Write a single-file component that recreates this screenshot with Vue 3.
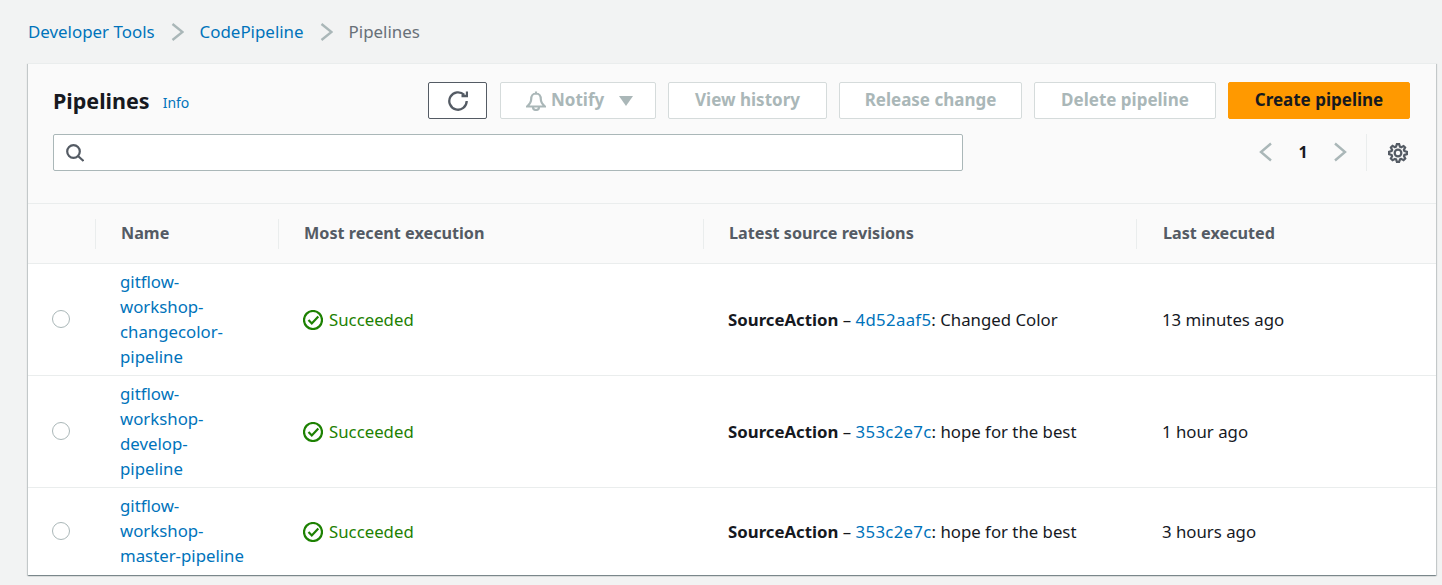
<template>
  <div class="page">
    <nav class="crumbs">
      <a>Developer Tools</a>
      <svg class="sep" width="13" height="20" viewBox="0 0 13 20"><path d="M1.500 2l10 8-10 8" /></svg>
      <a>CodePipeline</a>
      <svg class="sep" width="13" height="20" viewBox="0 0 13 20"><path d="M1.500 2l10 8-10 8" /></svg>
      <span class="current">Pipelines</span>
    </nav>

    <section class="card">
      <header class="head">
        <div class="toolbar">
          <h1 class="title">Pipelines</h1>
          <a class="info">Info</a>
          <div class="actions">
            <button class="btn refresh" aria-label="Refresh">
              <svg width="20" height="20" viewBox="0 0 20 20"><path d="M18.700 10a8.700 8.700 0 1 1-2.500-6.100" /><path d="M19 .5v4.500h-5.500" /></svg>
            </button>
            <button class="btn off notify" disabled>
              <svg width="20" height="20" viewBox="0 0 20 20">
                <path d="M10 2.500c-3.200 0-4.800 2.600-4.800 5.500 0 3.500-1.700 5.500-4.200 7.500h18c-2.500-2-4.200-4-4.200-7.500 0-2.900-1.600-5.500-4.800-5.500z" />
                <path d="M7 16a3 3 0 0 0 6 0M10 .5v2" />
              </svg>
              <span>Notify</span>
              <i class="caret"></i>
            </button>
            <button class="btn off hist" disabled>View history</button>
            <button class="btn off rel" disabled>Release change</button>
            <button class="btn off del" disabled>Delete pipeline</button>
            <button class="btn primary">Create pipeline</button>
          </div>
        </div>
        <div class="filter">
          <label class="search">
            <svg width="18" height="18" viewBox="0 0 18 18"><circle cx="7.500" cy="7.500" r="6.300" /><path d="M12 12l5.500 5" /></svg>
            <input type="text" />
          </label>
          <div class="pager">
            <svg class="arrow" width="16" height="20" viewBox="0 0 16 20"><path d="M13 1.500L3 10l10 8.500" /></svg>
            <span class="num">1</span>
            <svg class="arrow" width="16" height="20" viewBox="0 0 16 20"><path d="M3 1.500L13 10 3 18.500" /></svg>
          </div>
          <div class="gear">
            <svg width="20" height="20" viewBox="-1 -1 18 18">
              <circle cx="8" cy="8" r="3" />
              <path d="M13.300 5.200l1.100-2.100-1.400-1.400-2.100 1.100c-.3-.2-.7-.3-1.100-.4L9 0H7l-.8 2.300c-.3.1-.7.2-1 .4L3.100 1.600 1.600 3.100l1.100 2.100c-.2.3-.3.7-.4 1L0 7v2l2.300.8c.1.4.3.7.4 1.100l-1.100 2.100 1.500 1.500 2.100-1.100c.3.2.7.3 1.100.4L7 16h2l.8-2.300c.4-.1.7-.3 1.100-.4l2.100 1.100 1.500-1.500-1.100-2.100c.2-.3.3-.7.4-1.100L16 9V7l-2.300-.8c-.1-.3-.3-.7-.4-1z" />
            </svg>
          </div>
        </div>
      </header>

      <div class="row thead">
        <div class="cell"></div>
        <div class="cell th">Name</div>
        <div class="cell th">Most recent execution</div>
        <div class="cell th">Latest source revisions</div>
        <div class="cell th last">Last executed</div>
      </div>

      <div v-for="p in pipelines" :key="p.name" class="row tr">
        <div class="cell pick"><span class="radio"></span></div>
        <div class="cell name"><a>{{ p.name }}</a></div>
        <div class="cell status">
          <svg width="20" height="20" viewBox="0 0 20 20"><circle cx="10" cy="10" r="9" /><path d="M5.500 10l3.300 3.500 6.500-7" /></svg>
          Succeeded
        </div>
        <div class="cell"><b>SourceAction</b> – <a class="hash">{{ p.commit }}</a>: {{ p.message }}</div>
        <div class="cell last">{{ p.when }}</div>
      </div>
    </section>
  </div>
</template>

<script setup>
const pipelines = [
  { name: "gitflow-workshop-changecolor-pipeline", commit: "4d52aaf5", message: "Changed Color", when: "13 minutes ago" },
  { name: "gitflow-workshop-develop-pipeline", commit: "353c2e7c", message: "hope for the best", when: "1 hour ago" },
  { name: "gitflow-workshop-master-pipeline", commit: "353c2e7c", message: "hope for the best", when: "3 hours ago" },
];
</script>

<style>
html,
body {
  margin: 0;
  background: #f2f3f3;
}
</style>

<style scoped>
.page {
  height: 585px;
  overflow: hidden;
  padding: 0 6px 0 28px;
  box-sizing: border-box;
  font-family: "Noto Sans", Arial, sans-serif;
  font-size: 16.8px;
  color: #16191f;
}

a {
  color: #0073bb;
}

.crumbs {
  height: 63px;
  display: flex;
  align-items: center;
  gap: 16px;
  font-size: 16.900px;
}

.sep path {
  fill: none;
  stroke: #aab7b8;
  stroke-width: 2.400;
}

.current {
  color: #687078;
}

.card {
  background: #fff;
  box-shadow: 0 1px 1px 0 rgba(0, 28, 36, 0.3), 1px 1px 1px 0 rgba(0, 28, 36, 0.15), -1px 1px 1px 0 rgba(0, 28, 36, 0.15);
  border-top: 1px solid #eaeded;
}

.head {
  background: #fafafa;
  height: 140px;
  box-sizing: border-box;
  padding: 18px 26px 0 25px;
  border-bottom: 1px solid #eaeded;
}

.toolbar {
  display: flex;
  align-items: center;
}

.title {
  margin: 0;
  font-size: 21.500px;
  font-weight: 700;
}

.info {
  font-size: 14px;
  margin-left: 13px;
  margin-top: 3px;
}

.actions {
  margin-left: auto;
  display: flex;
  gap: 12px;
}

.btn {
  height: 37px;
  box-sizing: border-box;
  border: 1px solid #545b64;
  border-radius: 2px;
  background: #fff;
  font: 700 17px "Noto Sans", Arial, sans-serif;
  display: flex;
  align-items: center;
  justify-content: center;
  padding: 0 0 2px;
}

.refresh {
  width: 59px;
  margin-right: 1px;
  padding: 0;
}

.refresh path {
  fill: none;
  stroke: #545b64;
  stroke-width: 2.300;
}

.off {
  border-color: #d5dbdb;
  color: #aab7b8;
}

.notify {
  width: 156px;
  justify-content: flex-start;
  padding-left: 25px;
  gap: 5px;
}

.notify svg {
  margin-top: 2px;
}

.notify path {
  fill: none;
  stroke: #aab7b8;
  stroke-width: 2.200;
}

.caret {
  margin-left: 10px;
  margin-top: 2px;
  border: 7px solid transparent;
  border-top: 10px solid #aab7b8;
  border-bottom: 0;
}

.hist {
  width: 159px;
}

.rel {
  width: 183px;
}

.del {
  width: 182px;
}

.primary {
  width: 182px;
  background: #ff9900;
  border-color: #ff9900;
  color: #16191f;
}

.filter {
  display: flex;
  align-items: center;
  margin-top: 15px;
}

.search {
  width: 910px;
  height: 37px;
  box-sizing: border-box;
  border: 1px solid #aab7b8;
  border-radius: 2px;
  background: #fff;
  display: flex;
  align-items: center;
  padding-left: 12px;
  gap: 8px;
}

.search circle,
.search path {
  fill: none;
  stroke: #545b64;
  stroke-width: 2.200;
}

.search input {
  flex: 1;
  border: 0;
  background: none;
  outline: none;
}

.pager {
  margin-left: auto;
  display: flex;
  align-items: center;
  gap: 24px;
  padding-right: 18px;
  padding-bottom: 2px;
}

.arrow path {
  fill: none;
  stroke: #aab7b8;
  stroke-width: 2.400;
}

.num {
  font-weight: 700;
  font-size: 16px;
  width: 10px;
  text-align: center;
}

.gear {
  height: 37px;
  width: 44px;
  box-sizing: border-box;
  border-left: 1px solid #eaeded;
  display: flex;
  align-items: center;
  justify-content: flex-end;
  padding-right: 2px;
}

.gear circle,
.gear path {
  fill: none;
  stroke: #545b64;
  stroke-width: 2;
}

.row {
  display: grid;
  grid-template-columns: 67px 183px 425px 433px 1fr;
  align-items: center;
}

.thead {
  height: 60px;
  box-sizing: border-box;
  background: #fafafa;
  border-bottom: 1px solid #eaeded;
}

.th {
  font-size: 16.200px;
  font-weight: 700;
  color: #545b64;
  height: 30px;
  line-height: 28px;
  box-sizing: border-box;
  border-left: 1px solid #eaeded;
  padding-left: 25px;
}

.tr {
  height: 112px;
  box-sizing: border-box;
  border-bottom: 1px solid #eaeded;
}

.tr:last-child {
  height: 87px;
  border-bottom: 0;
}

.tr .cell {
  padding-left: 25px;
  line-height: 25px;
}

.tr .last,
.th.last {
  padding-left: 26px;
}

.tr .pick {
  padding-left: 24px;
  display: flex;
}

.radio {
  width: 18px;
  height: 18px;
  margin-bottom: 1px;
  border: 1px solid #aab7b8;
  border-radius: 50%;
  background: #fff;
  box-sizing: border-box;
}

.tr .name {
  padding-right: 30px;
  padding-bottom: 2px;
}

.hash {
  letter-spacing: 0.3px;
}

.status {
  color: #1d8102;
  display: flex;
  align-items: center;
  gap: 6px;
}

.status circle,
.status path {
  fill: none;
  stroke: #1d8102;
  stroke-width: 2.200;
}
</style>
